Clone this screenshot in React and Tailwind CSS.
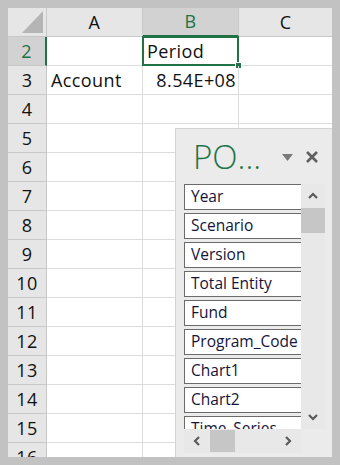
import React from 'react';

const ROWS = [2, 3, 4, 5, 6, 7, 8, 9, 10, 11, 12, 13, 14, 15, 16];
const FIELDS = ['Year', 'Scenario', 'Version', 'Total Entity', 'Fund', 'Program_Code', 'Chart1', 'Chart2', 'Time_Series'];

const font = { fontFamily: '"Open Sans", "Noto Sans", sans-serif' };

const Chevron = ({ dir }) => {
  const d = {
    up: 'M2 8 L6 4 L10 8',
    down: 'M2 4 L6 8 L10 4',
    left: 'M8 2 L4 6 L8 10',
    right: 'M4 2 L8 6 L4 10',
  }[dir];
  return (
    <svg width="12" height="12" viewBox="0 0 12 12">
      <path d={d} fill="none" stroke="#5a5a5a" strokeWidth="2.2" />
    </svg>
  );
};

// Spreadsheet grid with a floating field-list pane
export default function App() {
  return (
    <div className="w-[340px] h-[465px] bg-[#c2c2c2] pt-2 pl-2 pr-2 overflow-hidden relative" style={font}>
      <div className="bg-white h-[449px] overflow-hidden text-[18px] tracking-[0.4px] text-[#111]">
        {/* Column headers */}
        <div className="grid grid-cols-[39px_96px_96px_1fr] h-[29px]">
          <div className="bg-[#e6e6e6] border-r border-b border-[#c8c8c8] relative">
            <svg className="absolute right-[3px] bottom-[3px]" width="21" height="22" viewBox="0 0 21 22">
              <polygon points="21,0 21,22 0,22" fill="#b5b5b5" />
            </svg>
          </div>
          <div className="bg-[#e6e6e6] border-r border-b border-[#c8c8c8] flex items-center justify-center">A</div>
          <div className="bg-[#d2d2d2] border-r border-[#c8c8c8] border-b-2 border-b-[#217346] flex items-center justify-center text-[#217346]">B</div>
          <div className="bg-[#e6e6e6] border-b border-[#c8c8c8] flex items-center justify-center">C</div>
        </div>

        {/* Rows */}
        {ROWS.map((r) => (
          <div key={r} className="grid grid-cols-[39px_96px_96px_1fr] h-[29px]">
            {r === 2 ? (
              <div className="bg-[#d2d2d2] border-b border-[#c8c8c8] border-r-2 border-r-[#217346] flex items-center justify-center text-[#217346]">2</div>
            ) : (
              <div className="bg-[#e6e6e6] border-r border-b border-[#c8c8c8] flex items-center justify-center">{r}</div>
            )}
            <div className="border-r border-b border-[#dcdcdc] flex items-center pl-[4px]">
              {r === 3 ? 'Account' : ''}
            </div>
            <div className="border-r border-b border-[#dcdcdc] flex items-center relative">
              {r === 2 && (
                <>
                  <span className="pl-[4px]">Period</span>
                  <div className="absolute -left-px -top-px -right-px -bottom-px border-2 border-[#217346]" />
                  <div className="absolute -right-[4px] -bottom-[4px] w-[7px] h-[7px] bg-[#217346] border border-white" />
                </>
              )}
              {r === 3 && <span className="ml-auto pr-[2px]">8.54E+08</span>}
            </div>
            <div className="border-b border-[#dcdcdc]" />
          </div>
        ))}
      </div>

      {/* Field list pane */}
      <div className="absolute left-[175px] top-[128px] w-[157px] h-[329px] bg-[#ebebeb] border-l border-t border-[#d4d4d4] flex flex-col">
        <div className="flex items-center h-[55px] pl-[17px] pr-[13px]">
          <span className="text-[33px] text-[#217346] font-light leading-none">PO...</span>
          <svg className="ml-auto mt-[2px]" width="11" height="7" viewBox="0 0 11 7">
            <polygon points="0,0 11,0 5.5,7" fill="#7a7a7a" />
          </svg>
          <svg className="ml-[12px]" width="14" height="14" viewBox="0 0 14 14">
            <path d="M2 2 L12 12 M12 2 L2 12" stroke="#5f5f5f" strokeWidth="2.6" />
          </svg>
        </div>

        <div className="flex ml-[8px] h-[270px]">
          <div className="flex flex-col">
            <div className="w-[117px] h-[245px] overflow-hidden flex flex-col gap-[3px] bg-[#ebebeb]">
              {FIELDS.map((f) => (
                <div
                  key={f}
                  className="h-[26px] shrink-0 bg-white border border-[#6b6b6b] border-r-0 flex items-center pl-[6px] text-[15.5px] text-[#14143a] whitespace-nowrap overflow-hidden"
                >
                  {f}
                </div>
              ))}
            </div>
            {/* Horizontal scrollbar */}
            <div className="h-[24px] bg-[#e8e8e8] flex items-center w-[117px]">
              <div className="w-[26px] flex justify-center"><Chevron dir="left" /></div>
              <div className="w-[25px] h-[22px] bg-[#c6c6c6]" />
              <div className="ml-auto w-[26px] flex justify-center"><Chevron dir="right" /></div>
            </div>
          </div>
          {/* Vertical scrollbar */}
          <div className="w-[24px] h-[245px] bg-[#e8e8e8] flex flex-col items-center">
            <div className="h-[24px] flex items-center"><Chevron dir="up" /></div>
            <div className="w-[24px] h-[25px] bg-[#c6c6c6]" />
            <div className="mt-auto h-[24px] flex items-center"><Chevron dir="down" /></div>
          </div>
        </div>
      </div>
    </div>
  );
}
